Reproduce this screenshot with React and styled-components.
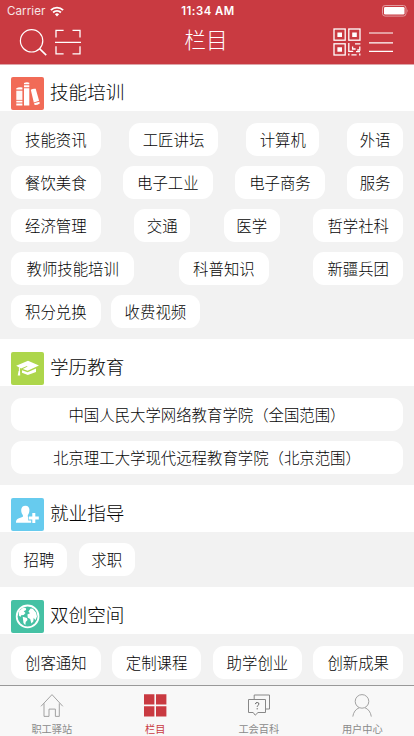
import React, { useState } from 'react'
import styled, { createGlobalStyle } from 'styled-components'

const GlobalStyle = createGlobalStyle`
* { box-sizing: border-box; }
body {
  margin: 0;
  background-color: #f2f2f2;
  font-family: 'Noto Sans CJK SC', sans-serif;
  font-weight: 300;
  color: #050505;
}
button {
  border: 0;
  padding: 0;
  margin: 0;
  background: none;
  font: inherit;
  color: inherit;
}
svg { display: block; }
`

const Page = styled.div`
height: 736px;
display: flex;
flex-direction: column;
overflow: hidden;
`

const Header = styled.header`
flex: none;
height: 65px;
background-color: #c93a41;
border-bottom: 1px solid #dea4a8;
color: #fff;
`

const StatusBar = styled.div`
height: 20px;
padding: 1px 5px 0 7px;
display: grid;
grid-template-columns: 1fr auto 1fr;
align-items: center;
font-family: Inter, 'Liberation Sans', sans-serif;
font-size: 11.6px;
line-height: 20px;
`

const Carrier = styled.div`
display: flex;
align-items: center;
gap: 5px;
font-weight: 400;
color: #f7e5e6;
letter-spacing: 0.05px;
`

const Clock = styled.div`
font-weight: 600;
font-size: 11.3px;
letter-spacing: 0.5px;
`

const Battery = styled.div`
display: flex;
justify-content: flex-end;
`

const NavBar = styled.div`
height: 44px;
padding: 0 21px 0 19px;
display: grid;
grid-template-columns: 1fr auto 1fr;
align-items: center;
`

const NavGroup = styled.div`
display: flex;
align-items: center;
gap: ${(p) => (p.$end ? 8 : 7)}px;
justify-content: ${(p) => (p.$end ? 'flex-end' : 'flex-start')};
`

const Title = styled.h1`
margin: 0;
padding-bottom: 6px;
font-size: 21.7px;
font-weight: 300;
line-height: 36px;
`

const Content = styled.main`
flex: 1;
min-height: 0;
overflow: hidden;
`

const SectionHead = styled.div`
height: ${(p) => (p.$first ? 46 : 47)}px;
padding: 0 11px 1px;
display: flex;
align-items: flex-end;
gap: 6px;
background-color: #fff;
`

const SectionTitle = styled.h2`
margin: 0;
font-size: 18.6px;
font-weight: 300;
line-height: 38px;
`

const Rows = styled.div`
padding: ${(p) => p.$top}px 11px 11px;
display: flex;
flex-direction: column;
gap: 10px;
`

const Row = styled.div`
display: flex;
gap: ${(p) => p.$gap || 0}px;
justify-content: ${(p) => (p.$gap ? 'flex-start' : 'space-between')};
`

const Pill = styled.button`
width: ${(p) => (p.$wide ? '100%' : p.$chars * 16.9 + 22 + 'px')};
height: 33px;
border-radius: 11px;
background-color: #fff;
font-size: 15.4px;
line-height: 33px;
white-space: nowrap;
text-align: center;
`

const TabBar = styled.nav`
flex: none;
height: 51px;
display: grid;
grid-template-columns: repeat(4, 1fr);
border-top: 1px solid #999;
background-color: #f8f8f8;
`

const Tab = styled.button`
display: flex;
flex-direction: column;
align-items: center;
padding-top: 7px;
color: ${(p) => (p.$active ? '#c93a41' : '#8a8a8a')};
font-size: 10.2px;
font-weight: 400;
line-height: 17px;
`

const TabLabel = styled.span`
margin-top: 3px;
`

const WifiIcon = () => (
  <svg width="14" height="11" viewBox="0 0 14 11" fill="none" stroke="#fff" strokeWidth="1.9">
    <path d="M0.9 4.1a8.7 8.7 0 0 1 12.2 0" />
    <path d="M3.1 6.5a5.6 5.6 0 0 1 7.8 0" />
    <path d="M7 10.4L4.9 8.2a3 3 0 0 1 4.2 0z" fill="#fff" stroke="none" />
  </svg>
)

const BatteryIcon = () => (
  <svg width="27" height="12" viewBox="0 0 27 12">
    <rect x="0.5" y="0.5" width="23.5" height="10.6" rx="2.6" fill="none" stroke="#e29a9f" />
    <rect x="2" y="2" width="20.5" height="7.6" rx="1.3" fill="#fff" />
    <path d="M25 4q1.4 1.8 0 3.8z" fill="#e29a9f" />
  </svg>
)

const SearchIcon = () => (
  <svg width="29" height="28" viewBox="0 0 29 28" fill="none" stroke="#fff" strokeWidth="1.2">
    <circle cx="12.6" cy="12.8" r="11.2" />
    <path d="M20.5 20.7l6.7 6.4" strokeWidth="1.6" />
  </svg>
)

const ScanIcon = () => (
  <svg width="26" height="26" viewBox="0 0 26 26" fill="none" stroke="#fff" strokeWidth="1.3">
    <path d="M1 8.6V1.3h7.6M17.5 1.3H25v7.3M25 17.2v7.6h-7.5M8.6 24.8H1v-7.6M0 13.4h26" />
  </svg>
)

const QrIcon = () => (
  <svg width="28" height="28" viewBox="0 0 28 28" fill="none" stroke="#fff" strokeWidth="1.3">
    <rect x="1" y="1" width="11.2" height="11.2" />
    <rect x="15.8" y="1" width="11.2" height="11.2" />
    <rect x="1" y="15.8" width="11.2" height="11.2" />
    <path d="M4.4 4.4h4.6v4.6H4.4zM19.2 4.4h4.6v4.6h-4.6zM4.4 19.2h4.6v4.6H4.4z" fill="#fff" stroke="none" />
    <path d="M15.8 15v8.4h4.4M15.8 25.4v2M18.4 26.8h5.2M19.6 18.6v2.4h3M22 15.8h5.4M26.8 18.6v3.4h-2.6M23 23.6h4M26.8 25.6v2" />
  </svg>
)

const MenuIcon = () => (
  <svg width="24" height="24" viewBox="0 0 24 24" stroke="#fff" strokeWidth="1.2">
    <path d="M0 3h24M0 12.8h24M0 21.3h24" />
  </svg>
)

const Badge = ({ color, children }) => (
  <svg width="33" height="33" viewBox="0 0 33 33">
    <rect width="33" height="33" rx="2" fill={color} />
    {children}
  </svg>
)

const BooksIcon = () => (
  <Badge color="#f16b57">
    <g fill="#fff">
      <path d="M5.3 11.2q3-1.4 6.1-.6v2H5.3z" />
      <path d="M5.3 13.7h6.1v9.2H5.3z" opacity="0.95" />
      <path d="M5.3 23.8h6.1v1.7H5.3zM5.3 26.4h6.1v2H5.3z" />
      <path d="M13 6q2.7-1.3 5.3-.3v1.5H13zM13 8.2h5.3v2.1H13zM13 11.2h5.3v17.2H13z" />
      <path d="M19.8 12.8q2.2-1.5 4.9-1l3.4 12-5.3 1.6zM23.1 26.3l5.3-1.5.4 1.6q-2.6 1.8-5.2 1.6z" />
    </g>
  </Badge>
)

const CapIcon = () => (
  <Badge color="#add64b">
    <path d="M5.2 13.8L17 8.7l11 4.8-11.4 5.3-4.8-1.8 4.7-2.4-.5-.7-6 2.6z" fill="#fff" />
    <path d="M11 18.2l5.6 2 8.4-3.7v3.6l-8.2 2.8-5.8-2.2z" fill="#fff" />
    <path d="M8.4 15.3v4.2" stroke="#fff" strokeWidth="1" />
    <path d="M7.6 19h1.4l.2 4.6H6.7z" fill="#fff" />
  </Badge>
)

const UserPlusIcon = () => (
  <Badge color="#67cbee">
    <path
      d="M14.5 7.8c2.8 0 4 1.8 3.9 4.4 0 2.2-.7 3.8-1.6 4.8v1.8c1.2 1 2.6 1.2 3.6 1.8v4.2H5c0-4 1.6-4 6.9-6.1V17c-1-1-1.7-2.8-1.7-4.8 0-2.8 1.6-4.4 4.3-4.4z"
      fill="#fff"
    />
    <path d="M22.8 14.3v11.4M17.2 20h11.2" stroke="#67cbee" strokeWidth="4.8" />
    <path d="M22.8 15v10M17.9 20h9.9" stroke="#fff" strokeWidth="3" />
  </Badge>
)

const GlobeIcon = () => (
  <Badge color="#45c1a4">
    <circle cx="16.6" cy="16.4" r="10.9" fill="none" stroke="#fff" strokeWidth="1.8" />
    <path d="M8.1 11l4.2-3.4 2.5.4.3 2-2.4 1.2 1.8 1.7-1.8 2-2.6.3-.6 1.8-1.6-1.6z" fill="#fff" />
    <path d="M11.7 16.8l4.3 1.3.5 2-1.8 2-.4 3.2-1.8-2.4z" fill="#fff" />
    <path d="M17.4 11.6l2.2-3 2.2.2 3.2 3.6 1 4-1.6 3.8-1.7-2.4-.4 3.6-1.9 2.2-1.2-4.7-2.4-1.2-.4-3.2 2.6-1.2z" fill="#fff" />
  </Badge>
)

const HomeIcon = () => (
  <svg width="24" height="24" viewBox="0 0 24 24" fill="none" stroke="#999" strokeWidth="0.9">
    <path d="M1 13.3L12 1.6l10.8 11.7M4 10.4v13h5v-7.3h6.4v7.3h3.9v-13" />
  </svg>
)

const GridIcon = () => (
  <svg width="24" height="24" viewBox="0 0 24 24" fill="#c93a41">
    <path d="M1 1.3h10.4v10.2H1zM13 1.3h10.4v10.2H13zM1 13.2h10.4v10.3H1zM13 13.2h10.4v10.3H13z" />
  </svg>
)

const WikiIcon = () => (
  <svg width="24" height="24" viewBox="0 0 24 24" fill="none" stroke="#888" strokeWidth="1">
    <path d="M7.2 6V2h15.3v14h-3.7" />
    <path d="M1.5 6.5h17v13H11l-2.8 2.7-2-2.7H1.5z" />
    <path d="M8.4 11.1q.2-1.7 1.9-1.6 1.7.1 1.6 1.5c0 1.2-1.7 1.3-1.7 2.8M10.2 15.1v1.3" stroke="#666" />
  </svg>
)

const UserIcon = () => (
  <svg width="24" height="24" viewBox="0 0 24 24" fill="none" stroke="#999" strokeWidth="0.9">
    <circle cx="12" cy="8.4" r="6.8" />
    <path d="M2.8 23.6c.6-4.3 2.8-7.4 6.5-8.9M14.9 14.7c3.6 1.4 5.8 4.6 6.4 8.9" />
  </svg>
)

const sections = [
  {
    title: '技能培训',
    icon: <BooksIcon />,
    top: 12,
    rows: [
      { items: ['技能资讯', '工匠讲坛', '计算机', '外语'] },
      { items: ['餐饮美食', '电子工业', '电子商务', '服务'] },
      { items: ['经济管理', '交通', '医学', '哲学社科'] },
      { items: ['教师技能培训', '科普知识', '新疆兵团'] },
      { items: ['积分兑换', '收费视频'], gap: 10 },
    ],
  },
  {
    title: '学历教育',
    icon: <CapIcon />,
    top: 12,
    rows: [
      { items: ['中国人民大学网络教育学院（全国范围）'], wide: true },
      { items: ['北京理工大学现代远程教育学院（北京范围）'], wide: true },
    ],
  },
  {
    title: '就业指导',
    icon: <UserPlusIcon />,
    top: 11,
    rows: [{ items: ['招聘', '求职'], gap: 12 }],
  },
  {
    title: '双创空间',
    icon: <GlobeIcon />,
    top: 12,
    rows: [{ items: ['创客通知', '定制课程', '助学创业', '创新成果'] }],
  },
]

const tabs = [
  { label: '职工驿站', icon: <HomeIcon /> },
  { label: '栏目', icon: <GridIcon /> },
  { label: '工会百科', icon: <WikiIcon /> },
  { label: '用户中心', icon: <UserIcon /> },
]

export default function App() {
  const [active, setActive] = useState(1)

  const listaSections = sections.map((section, i) => (
    <section key={section.title}>
      <SectionHead $first={i === 0}>
        {section.icon}
        <SectionTitle>{section.title}</SectionTitle>
      </SectionHead>
      <Rows $top={section.top}>
        {section.rows.map((row) => (
          <Row key={row.items[0]} $gap={row.gap}>
            {row.items.map((item) => (
              <Pill key={item} $chars={item.length} $wide={row.wide}>{item}</Pill>
            ))}
          </Row>
        ))}
      </Rows>
    </section>
  ))

  return (
    <Page>
      <GlobalStyle />
      <Header>
        <StatusBar>
          <Carrier>Carrier <WifiIcon /></Carrier>
          <Clock>11:34 AM</Clock>
          <Battery><BatteryIcon /></Battery>
        </StatusBar>
        <NavBar>
          <NavGroup>
            <SearchIcon />
            <ScanIcon />
          </NavGroup>
          <Title>栏目</Title>
          <NavGroup $end>
            <QrIcon />
            <MenuIcon />
          </NavGroup>
        </NavBar>
      </Header>
      <Content>{listaSections}</Content>
      <TabBar>
        {tabs.map((tab, i) => (
          <Tab key={tab.label} $active={i === active} onClick={() => setActive(i)}>
            {tab.icon}
            <TabLabel>{tab.label}</TabLabel>
          </Tab>
        ))}
      </TabBar>
    </Page>
  )
}
